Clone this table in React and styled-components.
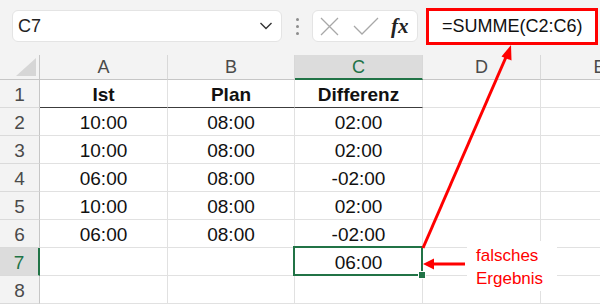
import React from "react";
import styled, { createGlobalStyle } from "styled-components";

const GREEN = "#217346";
const RED = "#ff0000";

const GlobalStyle = createGlobalStyle`
  body {
    margin: 0;
    background: #f3f3f3;
    overflow: hidden;
    font-family: "Liberation Sans", Arial, sans-serif;
  }
`;

const Page = styled.div`
  position: relative;
  width: 600px;
  height: 304px;
  overflow: hidden;
  background: #f3f3f3;
`;

// formula bar row
const Toolbar = styled.div`
  height: 55px;
  display: flex;
  align-items: flex-start;
  padding: 10px 0 0 12px;
  box-sizing: border-box;
`;

const NameBox = styled.div`
  width: 270px;
  height: 32px;
  box-sizing: border-box;
  background: #fff;
  border: 1px solid #e4e4e4;
  border-radius: 6px;
  display: flex;
  align-items: center;
  justify-content: space-between;
  padding: 0 8px 0 5px;
  font-size: 18px;
  color: #222;
`;

const Grip = styled.div`
  width: 30px;
  height: 32px;
  display: flex;
  flex-direction: column;
  align-items: center;
  justify-content: center;
  gap: 4px;

  span {
    width: 3px;
    height: 3px;
    border-radius: 50%;
    background: #8c8c8c;
  }
`;

const FuncBox = styled.div`
  width: 106px;
  height: 32px;
  box-sizing: border-box;
  background: #fff;
  border: 1px solid #e4e4e4;
  border-radius: 6px;
  display: flex;
  align-items: center;
  padding: 0 6px 0 7px;
  gap: 14px;
`;

const Fx = styled.span`
  font-family: "Liberation Serif", "Times New Roman", serif;
  font-style: italic;
  font-weight: bold;
  font-size: 21px;
  color: #222;
  margin-left: -2px;
`;

const FormulaBox = styled.div`
  margin: -2px 0 0 8px;
  width: 172px;
  height: 37px;
  box-sizing: border-box;
  background: #fff;
  border: 3px solid ${RED};
  display: flex;
  align-items: center;
  padding-left: 13px;
  font-size: 18px;
  color: #111;
  white-space: nowrap;
`;

// sheet grid
const Sheet = styled.div`
  display: grid;
  grid-template-columns: 40px 128px 127px 128px 118px 118px;
  grid-template-rows: 25px repeat(8, 28px);
`;

const Corner = styled.div`
  position: relative;
  background: #f3f3f3;
  border-right: 1px solid #c6c6c6;
  border-bottom: 1px solid #c6c6c6;
  box-sizing: border-box;

  &::after {
    content: "";
    position: absolute;
    right: 3px;
    bottom: 3px;
    width: 0;
    height: 0;
    border-left: 20px solid transparent;
    border-bottom: 18px solid #d6d6d6;
  }
`;

const ColHead = styled.div`
  box-sizing: border-box;
  background: ${(p) => (p.$active ? "#dcdcdc" : "#f3f3f3")};
  color: ${(p) => (p.$active ? GREEN : "#4a4a4a")};
  border-right: 1px solid #d8d8d8;
  border-bottom: ${(p) => (p.$active ? `2px solid ${GREEN}` : "1px solid #c6c6c6")};
  display: flex;
  justify-content: center;
  align-items: flex-end;
  font-size: 18px;
  line-height: 22px;
  padding-bottom: ${(p) => (p.$active ? "0" : "1px")};
`;

const RowHead = styled.div`
  box-sizing: border-box;
  background: ${(p) => (p.$active ? "#dcdcdc" : "#f3f3f3")};
  color: ${(p) => (p.$active ? GREEN : "#4a4a4a")};
  border-right: ${(p) => (p.$active ? `2px solid ${GREEN}` : "1px solid #c6c6c6")};
  border-bottom: 1px solid #dadada;
  display: flex;
  justify-content: center;
  align-items: flex-end;
  font-size: 19px;
  line-height: 22px;
  padding-bottom: 1px;
`;

const Cell = styled.div`
  position: relative;
  box-sizing: border-box;
  background: #fff;
  border-right: 1px solid #e1e1e1;
  border-bottom: ${(p) => (p.$ruled ? "1px solid #3c3c3c" : "1px solid #e1e1e1")};
  display: flex;
  justify-content: center;
  align-items: flex-end;
  font-size: 19px;
  line-height: 22px;
  padding-bottom: 1px;
  font-weight: ${(p) => (p.$bold ? "bold" : "normal")};
  color: #111;

  ${(p) =>
    p.$selected &&
    `
    &::after {
      content: "";
      position: absolute;
      left: -2px;
      top: -2px;
      right: -1px;
      bottom: -1px;
      border: 2px solid ${GREEN};
    }
    &::before {
      content: "";
      position: absolute;
      right: -4px;
      bottom: -4px;
      width: 6px;
      height: 6px;
      background: ${GREEN};
      border: 1px solid #fff;
      z-index: 1;
    }
  `}
`;

// annotations drawn over the sheet
const Overlay = styled.svg`
  position: absolute;
  left: 0;
  top: 0;
  pointer-events: none;
`;

const Note = styled.div`
  position: absolute;
  left: 467px;
  top: 241px;
  width: 90px;
  height: 50px;
  box-sizing: border-box;
  background: #fff;
  color: ${RED};
  font-size: 17px;
  line-height: 23px;
  padding: 3px 0 0 9px;
`;

const columns = ["A", "B", "C", "D", "E"];

const rows = [
  ["Ist", "Plan", "Differenz", "", ""],
  ["10:00", "08:00", "02:00", "", ""],
  ["10:00", "08:00", "02:00", "", ""],
  ["06:00", "08:00", "-02:00", "", ""],
  ["10:00", "08:00", "02:00", "", ""],
  ["06:00", "08:00", "-02:00", "", ""],
  ["", "", "06:00", "", ""],
  ["", "", "", "", ""],
];

export default function App() {
  const activeCol = 2;
  const activeRow = 6;

  return (
    <Page>
      <GlobalStyle />
      <Toolbar>
        <NameBox>
          C7
          <svg width="14" height="10" viewBox="0 0 14 10">
            <path d="M1.5 2 L7 7.5 L12.5 2" fill="none" stroke="#333" strokeWidth="1.4" />
          </svg>
        </NameBox>
        <Grip>
          <span />
          <span />
          <span />
        </Grip>
        <FuncBox>
          <svg width="19" height="19" viewBox="0 0 19 19">
            <path d="M1 1 L18 18 M18 1 L1 18" stroke="#a8a8a8" strokeWidth="1.3" />
          </svg>
          <svg width="26" height="19" viewBox="0 0 26 19">
            <path d="M1 9 L9 17 L25 1" fill="none" stroke="#a8a8a8" strokeWidth="1.3" />
          </svg>
          <Fx>fx</Fx>
        </FuncBox>
        <FormulaBox>=SUMME(C2:C6)</FormulaBox>
      </Toolbar>

      <Sheet>
        <Corner />
        {columns.map((c, i) => (
          <ColHead key={c} $active={i === activeCol}>
            {c}
          </ColHead>
        ))}
        {rows.map((row, r) => (
          <React.Fragment key={r}>
            <RowHead $active={r === activeRow}>{r + 1}</RowHead>
            {row.map((v, c) => (
              <Cell
                key={c}
                $bold={r === 0}
                $ruled={r === 0 && c < 3}
                $selected={r === activeRow && c === activeCol}
              >
                {v}
              </Cell>
            ))}
          </React.Fragment>
        ))}
      </Sheet>

      <Note>
        falsches
        <br />
        Ergebnis
      </Note>

      <Overlay width="600" height="304" viewBox="0 0 600 304">
        <line x1="423" y1="248" x2="506" y2="57" stroke={RED} strokeWidth="3" />
        <polygon points="511,45 501.5,56.5 511.5,60.5" fill={RED} />
        <line x1="465" y1="264" x2="432" y2="264" stroke={RED} strokeWidth="3" />
        <polygon points="423,264 434,258.5 434,269.5" fill={RED} />
      </Overlay>
    </Page>
  );
}
